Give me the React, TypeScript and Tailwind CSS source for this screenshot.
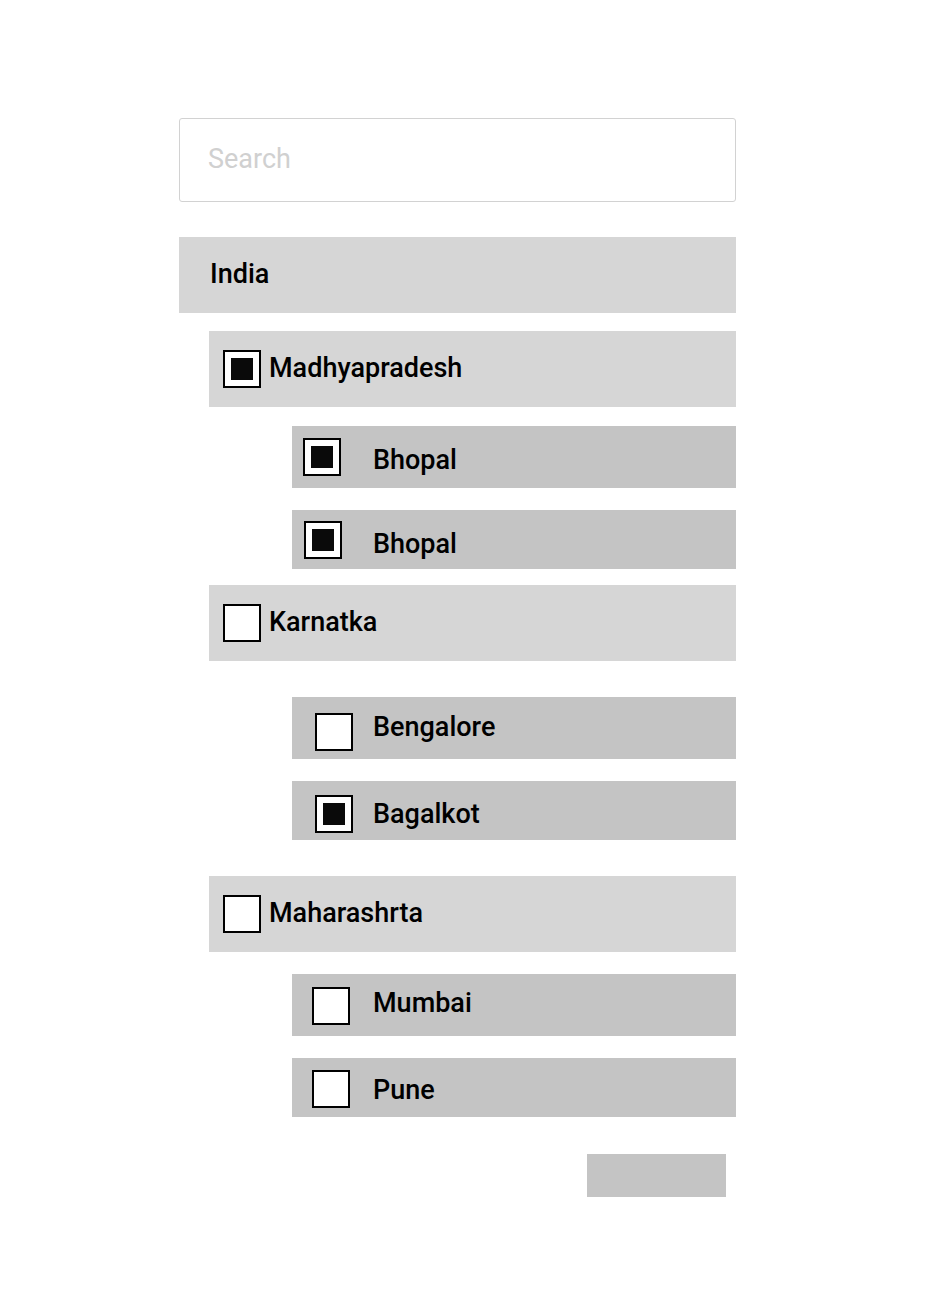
import React, { useState } from "react";

type City = {
  name: string;
  checked: boolean;
  boxLeft: string;
  boxShift: string;
  textShift: string;
  gap: string;
  h: string;
};
type State = { name: string; checked: boolean; gapBefore: string; cities: City[] };

const initial: State[] = [
  {
    name: "Madhyapradesh",
    checked: true,
    gapBefore: "mt-[18px]",
    cities: [
      { name: "Bhopal", checked: true, boxLeft: "ml-[11px]", boxShift: "", textShift: "pt-[6px]", gap: "mt-[19px]", h: "h-[62px]" },
      { name: "Bhopal", checked: true, boxLeft: "ml-[12px]", boxShift: "", textShift: "pt-[10px]", gap: "mt-[22px]", h: "h-[59px]" },
    ],
  },
  {
    name: "Karnatka",
    checked: false,
    gapBefore: "mt-[16px]",
    cities: [
      { name: "Bengalore", checked: false, boxLeft: "ml-[23px]", boxShift: "mt-[8px]", textShift: "pb-[2px]", gap: "mt-[36px]", h: "h-[62px]" },
      { name: "Bagalkot", checked: true, boxLeft: "ml-[23px]", boxShift: "mt-[7px]", textShift: "pt-[8px]", gap: "mt-[22px]", h: "h-[59px]" },
    ],
  },
  {
    name: "Maharashrta",
    checked: false,
    gapBefore: "mt-[36px]",
    cities: [
      { name: "Mumbai", checked: false, boxLeft: "ml-[20px]", boxShift: "mt-[2px]", textShift: "pb-[4px]", gap: "mt-[22px]", h: "h-[62px]" },
      { name: "Pune", checked: false, boxLeft: "ml-[20px]", boxShift: "mt-[3px]", textShift: "pt-[6px]", gap: "mt-[22px]", h: "h-[59px]" },
    ],
  },
];

function Box({ checked, className = "" }: { checked: boolean; className?: string }) {
  return (
    <span
      className={`flex h-[38px] w-[38px] shrink-0 items-center justify-center border-2 border-black bg-white ${className}`}
    >
      {checked && <span className="h-[22px] w-[22px] bg-[#0a0a0a]" />}
    </span>
  );
}

export default function App() {
  const [states, setStates] = useState(initial);
  const [query, setQuery] = useState("");

  const toggleCity = (si: number, ci: number) => {
    setStates((prev) =>
      prev.map((s, i) =>
        i !== si ? s : { ...s, cities: s.cities.map((c, j) => (j === ci ? { ...c, checked: !c.checked } : c)) }
      )
    );
  };

  const toggleState = (si: number) => {
    setStates((prev) => prev.map((s, i) => (i === si ? { ...s, checked: !s.checked } : s)));
  };

  return (
    <div className="min-h-screen bg-white font-['Roboto',sans-serif] text-black">
      <div className="ml-[179px] w-[557px] pt-[118px] pb-[104px]">
        {/* Search */}
        <input
          value={query}
          onChange={(e) => setQuery(e.target.value)}
          placeholder="Search"
          className="block h-[84px] w-full rounded-[3px] border border-[#d2d2d2] pl-[28px] pb-[2px] text-[27px] outline-none placeholder:text-[#d0d0d0]"
        />

        {/* Country */}
        <div className="mt-[35px] flex h-[76px] items-center bg-[#d6d6d6] pl-[31px] pb-[2px] text-[27px] font-medium">
          India
        </div>

        {states.map((s, si) => (
          <div key={s.name}>
            <button
              onClick={() => toggleState(si)}
              className={`${s.gapBefore} ml-[30px] flex h-[76px] w-[527px] items-center bg-[#d6d6d6] pl-[14px] text-left`}
            >
              <Box checked={s.checked} />
              <span className="ml-[8px] pb-[2px] text-[27px] font-medium">{s.name}</span>
            </button>

            {s.cities.map((c, ci) => (
              <button
                key={ci}
                onClick={() => toggleCity(si, ci)}
                className={`${c.gap} ${c.h} ml-[113px] flex w-[444px] items-center bg-[#c4c4c4] text-left`}
              >
                <span className="flex w-[81px] shrink-0">
                  <Box checked={c.checked} className={`${c.boxLeft} ${c.boxShift}`} />
                </span>
                <span className={`${c.textShift} text-[27px] font-medium`}>{c.name}</span>
              </button>
            ))}
          </div>
        ))}

        <div className="mt-[37px] flex justify-end pr-[10px]">
          <button className="h-[43px] w-[139px] bg-[#c4c4c4]" />
        </div>
      </div>
    </div>
  );
}
